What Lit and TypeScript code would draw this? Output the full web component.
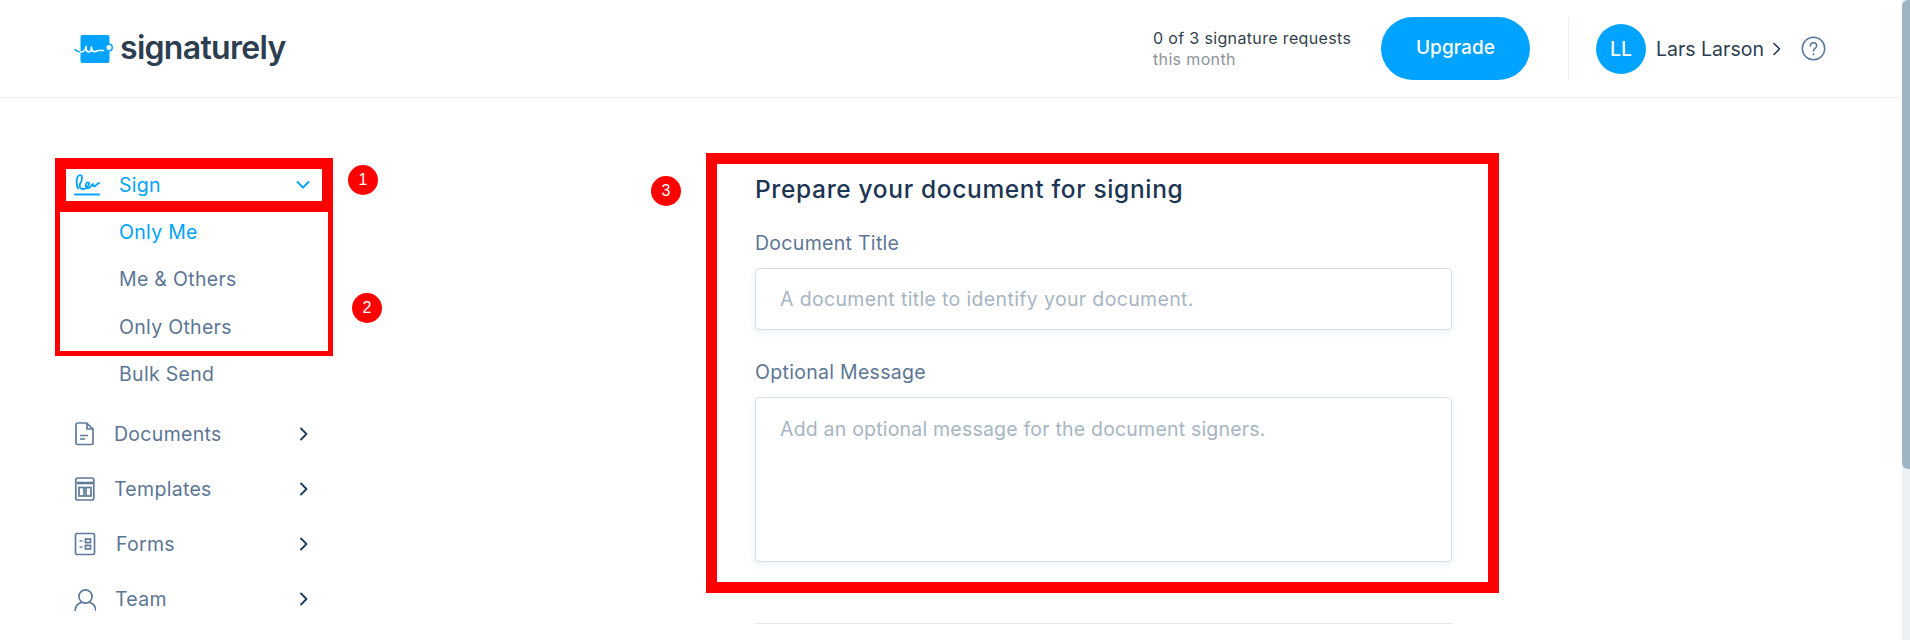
import { LitElement, html, css, svg } from "lit";
import { customElement } from "lit/decorators.js";

const chevronRight = html`<svg class="chev" width="12" height="14" viewBox="0 0 12 14" fill="none" stroke="#1f3a5a" stroke-width="1.8" stroke-linecap="round" stroke-linejoin="round"><path d="M3 1.5 8.5 7 3 12.5"/></svg>`;

const icons: Record<string, unknown> = {
  doc: svg`<path d="M3.5 1h9.2L19 7.2V21a1.5 1.5 0 0 1-1.5 1.5h-14A1.5 1.5 0 0 1 2 21V2.5A1.5 1.5 0 0 1 3.5 1Z"/><path d="M13 1v6h6"/><path d="M6 13.5h8M6 17h5"/>`,
  tpl: svg`<rect x="1.8" y="1" width="18" height="22" rx="2"/><path d="M3 6h16" stroke-width="2.6"/><rect x="5" y="10.5" width="5" height="8.5"/><rect x="12" y="10.5" width="5" height="8.5"/>`,
  form: svg`<rect x="1.5" y="1.5" width="19" height="21" rx="1.5"/><path d="M5.5 9h3M5.5 15h3"/><rect x="11.5" y="7" width="5" height="3.6"/><rect x="11.5" y="13.4" width="5" height="3.6"/>`,
  team: svg`<circle cx="11.5" cy="9.5" r="6.6"/><path d="M1 24c.3-4.5 3-7.6 6.5-8.3M15.5 15.7c3.5.7 6.2 3.8 6.5 8.3"/>`,
};

@customElement("app-root")
export class AppRoot extends LitElement {
  static styles = css`
    :host {
      display: block;
      position: relative;
      width: 1910px;
      height: 640px;
      overflow: hidden;
      background: #fff;
      font-family: "Inter", "Liberation Sans", sans-serif;
      color: #5c7695;
    }
    .page { display: flex; height: 640px; }
    .content { flex: 1; min-width: 0; }
    .scrollbar { width: 8px; background: #ebf0f4; }
    .thumb { height: 469px; background: #9fb5c3; border-radius: 6px 0 0 6px; }

    .header {
      height: 97px;
      border-bottom: 1px solid #e9eeee;
      display: flex;
      align-items: center;
    }
    .logo { display: flex; align-items: center; margin-left: 74px; }
    .logo-text {
      font-size: 32px;
      font-weight: 600;
      color: #2c3e50;
      margin-left: 6px;
      letter-spacing: -0.7px;
      line-height: 40px;
      position: relative;
      top: -1px;
    }
    .header-right { margin-left: auto; display: flex; align-items: center; height: 64px; }
    .quota { width: 200px; font-size: 16px; line-height: 21px; color: #333f4d; white-space: nowrap; letter-spacing: 0.35px; }
    .quota div + div { color: #8d9499; }
    .upgrade {
      margin-left: 28px;
      width: 149px;
      height: 63px;
      padding: 0 0 2px;
      border: none;
      border-radius: 32px;
      background: #00a3ff;
      color: #fff;
      font: 500 19px "Inter", sans-serif;
      letter-spacing: 0.1px;
    }
    .vr { width: 1px; height: 63px; background: #e9eeee; margin-left: 38px; }
    .avatar {
      margin-left: 27px;
      width: 50px;
      height: 50px;
      border-radius: 50%;
      background: #00a3ff;
      color: #fff;
      font-size: 19.5px;
      font-weight: 500;
      display: flex;
      align-items: center;
      justify-content: center;
    }
    .name { margin-left: 10px; width: 106px; white-space: nowrap; font-size: 19.5px; color: #2b3d52; }
    .user-chev { margin-left: 10px; display: block; }
    .help { margin-left: 19px; margin-right: 76px; display: block; }

    .body { display: flex; }
    .side { width: 330px; flex: none; padding: 69px 0 0 74px; box-sizing: border-box; }
    .row { display: flex; align-items: center; height: 36px; font-size: 19.5px; letter-spacing: 0.3px; }
    .row svg.ico { width: 22px; height: 24px; fill: none; stroke: #5f7a99; stroke-width: 1.7; flex: none; }
    .sign { color: #00a3ff; }
    .sign .ico2 { flex: none; }
    .sign span { margin-left: 19px; }
    .grow { flex: 1; }
    .down { margin-right: 20px; }
    .sub { font-size: 19.5px; letter-spacing: 0.3px; padding-left: 45px; height: 47.5px; display: flex; align-items: center; }
    .subs { margin-top: 5px; margin-bottom: 18px; }
    .sub.on { color: #00a3ff; }
    .rows { display: flex; flex-direction: column; gap: 19px; }
    .rows .chev { margin-right: 20px; }

    .main { margin-left: 425px; width: 697px; padding-top: 75px; }
    h1 { margin: 0; font-size: 24.5px; font-weight: 500; color: #1c3553; line-height: 32px; letter-spacing: 0.65px; }
    label { display: block; font-size: 19.5px; letter-spacing: 0.3px; line-height: 24px; margin-top: 26px; }
    .field {
      margin-top: 13px;
      border: 1px solid #d6e0ea;
      border-radius: 4px;
      box-shadow: 0 3px 6px rgba(120, 150, 200, 0.14);
      background: #fff;
      color: #a7b5c3;
      font-size: 19.5px;
      box-sizing: border-box;
      padding: 0 24px;
    }
    .single { height: 62px; display: flex; align-items: center; letter-spacing: 0.35px; }
    .multi { height: 165px; padding-top: 19px; line-height: 24px; letter-spacing: 0.2px; }
    .label2 { margin-top: 30px; }
    .rule { height: 1px; background: #e4e7ec; margin-top: 61px; }

    .mark { position: absolute; box-sizing: border-box; border: solid #f00; pointer-events: none; }
    .m1 { left: 55px; top: 158px; width: 278px; height: 54px; border-width: 11px; }
    .m2 { left: 55px; top: 212px; width: 278px; height: 144px; border-width: 0 5px 5px; }
    .m3 { left: 706px; top: 153px; width: 793px; height: 440px; border-width: 11px; }
    .dot {
      position: absolute;
      width: 30px;
      height: 30px;
      border-radius: 50%;
      background: #f00;
      color: #fff;
      font: 16px/30px "Liberation Sans", sans-serif;
      text-align: center;
    }
    .d1 { left: 348px; top: 165px; }
    .d2 { left: 352px; top: 293px; }
    .d3 { left: 651px; top: 176px; }
  `;

  private row(name: string, icon: string, gap: number) {
    return html`<div class="row">
      <svg class="ico" viewBox="0 0 22 24">${icons[icon]}</svg>
      <span style="margin-left:${gap}px">${name}</span>
      <div class="grow"></div>
      ${chevronRight}
    </div>`;
  }

  render() {
    return html`
      <div class="page">
        <div class="content">
          <div class="header">
            <div class="logo">
              <svg width="40" height="30" viewBox="0 0 40 30">
                <rect x="6.5" y="1" width="29" height="28" rx="2" fill="#00a3ff"/>
                <path d="M6.5 18c-2 0-4-.8-5.500-2.500" fill="none" stroke="#00a3ff" stroke-width="1.6" stroke-linecap="round"/>
                <path d="M6.5 18c2 0 3.500-.5 4.500-2 .8-1.200 1-2.600 1-3.500 0 3 .8 5.500 2.800 5.500s2.700-2.500 2.700-5c0 2.800.9 4.700 3 4.700 2 0 2.500-1.200 4-1.200h5" fill="none" stroke="#fff" stroke-width="1.7" stroke-linecap="round" stroke-linejoin="round"/>
                <circle cx="35" cy="13.5" r="4" fill="#00a3ff"/>
                <circle cx="35" cy="13.5" r="2.5" fill="#fff"/>
              </svg>
              <div class="logo-text">signaturely</div>
            </div>
            <div class="header-right">
              <div class="quota"><div>0 of 3 signature requests</div><div>this month</div></div>
              <button class="upgrade">Upgrade</button>
              <div class="vr"></div>
              <div class="avatar">LL</div>
              <div class="name">Lars Larson</div>
              <svg class="user-chev" width="10" height="14" viewBox="0 0 10 14" fill="none" stroke="#2b3d52" stroke-width="1.6" stroke-linecap="round" stroke-linejoin="round"><path d="M2 1.5 7.5 7 2 12.5"/></svg>
              <svg class="help" width="25" height="25" viewBox="0 0 25 25" fill="none" stroke="#5c7695" stroke-width="1.5"><circle cx="12.5" cy="12.5" r="11.2"/><path d="M9.3 10c0-2 1.400-3.200 3.200-3.200s3.200 1.200 3.200 3c0 2.600-3.200 2.600-3.200 5.200" stroke-linecap="round"/><circle cx="12.5" cy="18.3" r=".7" fill="#5c7695" stroke-width=".6"/></svg>
            </div>
          </div>
          <div class="body">
            <aside class="side">
              <div class="row sign">
                <svg class="ico2" width="26" height="24" viewBox="0 0 26 24" fill="none" stroke="#00a3ff" stroke-width="1.8" stroke-linecap="round" stroke-linejoin="round">
                  <path d="M4 15.5C1.500 10 2.500 2.500 6 2.200 9 2 8.500 7 6 11c-1 2 0 5 3 5s5.500-3 6-5c.5-2-2-2.500-3 0s1 5 3 4 3-3.500 4-4c0 2 1 3 2 2s2-2 4-3"/>
                  <path d="M1 21.5h24" stroke-width="2"/>
                </svg>
                <span>Sign</span>
                <div class="grow"></div>
                <svg class="down" width="14" height="10" viewBox="0 0 14 10" fill="none" stroke="#00a3ff" stroke-width="1.8" stroke-linecap="round" stroke-linejoin="round"><path d="M1.5 2 7 7.5 12.5 2"/></svg>
              </div>
              <div class="subs">
                <div class="sub on">Only Me</div>
                <div class="sub">Me &amp; Others</div>
                <div class="sub">Only Others</div>
                <div class="sub">Bulk Send</div>
              </div>
              <div class="rows">
                ${this.row("Documents", "doc", 18)}
                ${this.row("Templates", "tpl", 18)}
                ${this.row("Forms", "form", 20)}
                ${this.row("Team", "team", 19)}
              </div>
            </aside>
            <main class="main">
              <h1>Prepare your document for signing</h1>
              <label>Document Title</label>
              <div class="field single">A document title to identify your document.</div>
              <label class="label2">Optional Message</label>
              <div class="field multi">Add an optional message for the document signers.</div>
              <div class="rule"></div>
            </main>
          </div>
        </div>
        <div class="scrollbar"><div class="thumb"></div></div>
      </div>
      <div class="mark m1"></div>
      <div class="mark m2"></div>
      <div class="mark m3"></div>
      <div class="dot d1">1</div>
      <div class="dot d2">2</div>
      <div class="dot d3">3</div>
    `;
  }
}
